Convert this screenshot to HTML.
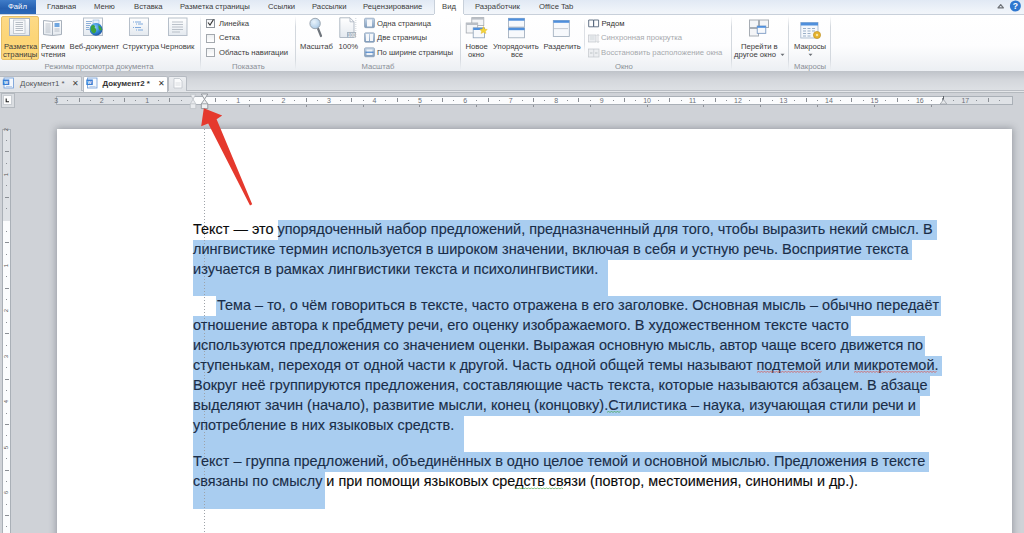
<!DOCTYPE html>
<html><head><meta charset="utf-8">
<style>
*{box-sizing:border-box}
html,body{margin:0;padding:0}
body{width:1024px;height:533px;overflow:hidden;position:relative;background:#c9cdd3;font-family:"Liberation Sans",sans-serif;}
.a{position:absolute}
.t{position:absolute;white-space:nowrap;font-size:7.7px;line-height:9px;color:#3c3c3c}
.g{color:#8a8f96}
.dis{color:#a6a9ad}
.sep{position:absolute;top:16px;width:1px;height:54px;background:linear-gradient(rgba(200,205,212,0),#d3d8de 20%,#d3d8de 80%,rgba(200,205,212,0))}
.ln{position:absolute;left:193px;height:20px;line-height:20px;font-size:14.5px;color:#1a2d48;white-space:pre;transform-origin:0 0;-webkit-text-stroke:0.12px currentColor}
.bk{color:#0a0a0a}
.hl{position:absolute;background:#a9cdf0}
.rn{position:absolute;top:96.5px;font-size:7px;line-height:7px;color:#6c7178;width:14px;margin-left:-7px;text-align:center}
.tk{position:absolute;background:#8b8f95}
</style></head><body>

<!-- ===== tab row ===== -->
<div class="a" style="left:0;top:0;width:1024px;height:15px;background:linear-gradient(#e1e9f4,#eef3f9 70%,#f2f5fa);border-bottom:1px solid #c8d0da"></div>
<div class="a" style="left:0;top:0;width:36px;height:14px;background:linear-gradient(#3f7cc8,#2660b0 60%,#2a68b8)"></div>
<div class="t" style="left:8px;top:2px;color:#fff;font-size:7.7px">Файл</div>
<div class="t" style="left:47px;top:2px">Главная</div>
<div class="t" style="left:94px;top:2px">Меню</div>
<div class="t" style="left:134px;top:2px">Вставка</div>
<div class="t" style="left:180px;top:2px">Разметка страницы</div>
<div class="t" style="left:268px;top:2px">Ссылки</div>
<div class="t" style="left:312px;top:2px">Рассылки</div>
<div class="t" style="left:363px;top:2px">Рецензирование</div>
<div class="a" style="left:434px;top:0;width:30px;height:16px;background:#fff;border-left:1px solid #c8d0da;border-right:1px solid #c8d0da"></div>
<div class="t" style="left:442px;top:2px">Вид</div>
<div class="t" style="left:475px;top:2px">Разработчик</div>
<div class="t" style="left:539px;top:2px">Office Tab</div>
<!-- help icons -->
<svg class="a" style="left:990px;top:0px" width="34" height="14" viewBox="990 0 34 14"><path d="M998 7.8 L1000.7 4.6 L1003.4 7.8 Z" fill="none" stroke="#6f7378" stroke-width="1.3" stroke-linejoin="round"/><circle cx="1015.4" cy="6" r="5.5" fill="#2f77cf"/><text x="1015.4" y="9.3" font-size="8.6" font-weight="bold" fill="#fff" text-anchor="middle" font-family="Liberation Sans">?</text></svg>

<!-- ===== ribbon ===== -->
<div class="a" style="left:0;top:15px;width:1024px;height:56.5px;background:linear-gradient(#ffffff,#fdfdfe 55%,#eceff3);border-bottom:1.2px solid #a4a9b1"></div>
<div class="a" style="left:434px;top:14px;width:30px;height:2px;background:#fff"></div>

<!-- group 1 -->
<div class="a" style="left:1px;top:16px;width:38px;height:44px;background:linear-gradient(#fdda86,#fcd577 50%,#fcd87c);border:1px solid #e8c16a;border-radius:2px"></div>
<div class="t" style="left:4px;top:41.5px">Разметка</div>
<div class="t" style="left:3px;top:49.5px">страницы</div>
<div class="t" style="left:41px;top:41.5px">Режим</div>
<div class="t" style="left:41px;top:49.5px">чтения</div>
<div class="t" style="left:69.5px;top:41.5px">Веб-документ</div>
<div class="t" style="left:122.5px;top:41.5px">Структура</div>
<div class="t" style="left:160.5px;top:41.5px">Черновик</div>
<div class="t g" style="left:44.5px;top:61.5px">Режимы просмотра документа</div>
<div class="sep" style="left:200px"></div>

<!-- group 2 -->
<div class="a" style="left:206px;top:18.5px;width:9px;height:9px;border:1px solid #8f959c;background:linear-gradient(#f3f4f6,#fff)"></div>
<svg class="a" style="left:206px;top:18px" width="9" height="9" viewBox="0 0 9 9"><path d="M2 4.5 L4 7 L7.5 1.5" fill="none" stroke="#333" stroke-width="1.1"/></svg>
<div class="a" style="left:206px;top:33.5px;width:9px;height:9px;border:1px solid #a3a8ae;background:linear-gradient(#eef0f2,#fff)"></div>
<div class="a" style="left:206px;top:48px;width:9px;height:9px;border:1px solid #a3a8ae;background:linear-gradient(#eef0f2,#fff)"></div>
<div class="t" style="left:219px;top:18.5px">Линейка</div>
<div class="t" style="left:219px;top:33px">Сетка</div>
<div class="t" style="left:219px;top:47.5px">Область навигации</div>
<div class="t g" style="left:232px;top:61.5px">Показать</div>
<div class="sep" style="left:295px"></div>

<!-- group 3 -->
<div class="t" style="left:300px;top:41.5px">Масштаб</div>
<div class="t" style="left:338.5px;top:41.5px">100%</div>
<div class="t" style="left:377px;top:18.5px">Одна страница</div>
<div class="t" style="left:377px;top:33px">Две страницы</div>
<div class="t" style="left:377px;top:47.5px">По ширине страницы</div>
<div class="t g" style="left:361.5px;top:61.5px">Масштаб</div>
<div class="sep" style="left:460px"></div>

<!-- group 4 -->
<div class="t" style="left:465.5px;top:41.5px">Новое</div>
<div class="t" style="left:468px;top:49.5px">окно</div>
<div class="t" style="left:493px;top:41.5px">Упорядочить</div>
<div class="t" style="left:511px;top:49.5px">все</div>
<div class="t" style="left:543.5px;top:41.5px">Разделить</div>
<div class="a" style="left:583.5px;top:19px;width:1px;height:34px;background:linear-gradient(rgba(210,214,220,0),#dde0e5 25%,#dde0e5 75%,rgba(210,214,220,0))"></div>
<div class="t" style="left:601.5px;top:18.5px;color:#333">Рядом</div>
<div class="t dis" style="left:601px;top:33px">Синхронная прокрутка</div>
<div class="t dis" style="left:601px;top:47.5px">Восстановить расположение окна</div>
<div class="t g" style="left:615px;top:61.5px">Окно</div>
<div class="sep" style="left:731px"></div>
<div class="t" style="left:741px;top:41.5px">Перейти в</div>
<div class="t" style="left:734px;top:49.5px">другое окно</div>
<svg class="a" style="left:780px;top:53px" width="5" height="4" viewBox="0 0 5 4"><path d="M0.5 0.8 H4.5 L2.5 3 Z" fill="#6b6f75"/></svg>
<div class="sep" style="left:788px"></div>

<!-- group 5 -->
<div class="t" style="left:794px;top:41.5px">Макросы</div>
<svg class="a" style="left:807.5px;top:53px" width="5" height="4" viewBox="0 0 5 4"><path d="M0.5 0.8 H4.5 L2.5 3 Z" fill="#6b6f75"/></svg>
<div class="t g" style="left:794px;top:61.5px">Макросы</div>
<div class="sep" style="left:830px"></div>

<!-- ===== doc tab bar ===== -->
<div class="a" style="left:0;top:71px;width:1024px;height:21px;background:linear-gradient(#bfc3c9,#d3d6db 40%,#dfe2e6)"></div>
<div class="a" style="left:0;top:90px;width:1024px;height:1px;background:#b9bdc3"></div>
<div class="a" style="left:0;top:91px;width:1024px;height:1px;background:#e4e6e9"></div>
<div class="a" style="left:0;top:92px;width:1024px;height:1px;background:#b5babf"></div>
<div class="a" style="left:-2px;top:75.5px;width:84px;height:15.5px;background:linear-gradient(#eceef1,#dfe2e6);border:1px solid #b6bbc2;border-bottom:none;border-radius:2px 2px 0 0"></div>
<div class="t" style="left:20px;top:79px;font-size:7.9px;color:#55585c">Документ1 *</div>
<div class="t" style="left:72px;top:78.5px;font-size:8px;color:#444">✕</div>
<div class="a" style="left:82.5px;top:75.5px;width:85px;height:16.5px;background:#fff;border:1px solid #b6bbc2;border-bottom:none;border-radius:2px 2px 0 0"></div>
<div class="t" style="left:102.5px;top:79px;font-size:7.9px;font-weight:bold;color:#333">Документ2 *</div>
<div class="t" style="left:157.5px;top:78.5px;font-size:8px;color:#333">✕</div>
<div class="a" style="left:168px;top:75.5px;width:19px;height:15px;background:linear-gradient(#eceef1,#dfe2e6);border:1px solid #b6bbc2;border-bottom:none;border-radius:2px 2px 0 0"></div>

<!-- ===== ruler row ===== -->
<div class="a" style="left:0;top:93px;width:1024px;height:440px;background:#cfd2d7"></div>
<div class="a" style="left:1px;top:93px;width:13.5px;height:15px;background:#dadde1;border:1px solid #b4b9bf"></div>
<div class="a" style="left:3px;top:95px;width:8.5px;height:9.5px;background:#fdfdfd;border:1px solid #c9cdd2"></div>
<svg class="a" style="left:4px;top:96px" width="7" height="8" viewBox="0 0 7 8"><path d="M2.2 2.5 V5.8 H5" fill="none" stroke="#1f1f1f" stroke-width="1.1"/></svg>
<div class="a" style="left:56px;top:95.5px;width:957px;height:9px;background:#dfe2e6;border:1px solid #aab0b7"></div>
<div class="a" style="left:193.5px;top:96.5px;width:750px;height:7px;background:#fbfcfd"></div>
<div class="a" style="left:943px;top:96px;width:1px;height:4px;background:#5d6268"></div>
<div class="a" style="left:2px;top:128.5px;width:9px;height:410px;background:#fbfcfd;border:1px solid #aab0b7"></div>
<div class="a" style="left:3px;top:129.5px;width:7px;height:91px;background:#dfe2e6"></div>
<div class="rn" style="left:56.2px">3</div>
<div class="tk" style="left:67.1px;top:99.5px;width:1px;height:1px"></div>
<div class="tk" style="left:78.5px;top:98px;width:1px;height:4px"></div>
<div class="tk" style="left:89.8px;top:99.5px;width:1px;height:1px"></div>
<div class="rn" style="left:101.7px">2</div>
<div class="tk" style="left:112.6px;top:99.5px;width:1px;height:1px"></div>
<div class="tk" style="left:123.9px;top:98px;width:1px;height:4px"></div>
<div class="tk" style="left:135.3px;top:99.5px;width:1px;height:1px"></div>
<div class="rn" style="left:147.1px">1</div>
<div class="tk" style="left:158.0px;top:99.5px;width:1px;height:1px"></div>
<div class="tk" style="left:169.4px;top:98px;width:1px;height:4px"></div>
<div class="tk" style="left:180.7px;top:99.5px;width:1px;height:1px"></div>
<div class="tk" style="left:203.5px;top:99.5px;width:1px;height:1px"></div>
<div class="tk" style="left:214.8px;top:98px;width:1px;height:4px"></div>
<div class="tk" style="left:226.2px;top:99.5px;width:1px;height:1px"></div>
<div class="rn" style="left:238.1px">1</div>
<div class="tk" style="left:248.9px;top:99.5px;width:1px;height:1px"></div>
<div class="tk" style="left:260.3px;top:98px;width:1px;height:4px"></div>
<div class="tk" style="left:271.6px;top:99.5px;width:1px;height:1px"></div>
<div class="rn" style="left:283.5px">2</div>
<div class="tk" style="left:294.4px;top:99.5px;width:1px;height:1px"></div>
<div class="tk" style="left:305.7px;top:98px;width:1px;height:4px"></div>
<div class="tk" style="left:317.1px;top:99.5px;width:1px;height:1px"></div>
<div class="rn" style="left:329.0px">3</div>
<div class="tk" style="left:339.8px;top:99.5px;width:1px;height:1px"></div>
<div class="tk" style="left:351.2px;top:98px;width:1px;height:4px"></div>
<div class="tk" style="left:362.5px;top:99.5px;width:1px;height:1px"></div>
<div class="rn" style="left:374.4px">4</div>
<div class="tk" style="left:385.3px;top:99.5px;width:1px;height:1px"></div>
<div class="tk" style="left:396.6px;top:98px;width:1px;height:4px"></div>
<div class="tk" style="left:408.0px;top:99.5px;width:1px;height:1px"></div>
<div class="rn" style="left:419.9px">5</div>
<div class="tk" style="left:430.7px;top:99.5px;width:1px;height:1px"></div>
<div class="tk" style="left:442.1px;top:98px;width:1px;height:4px"></div>
<div class="tk" style="left:453.4px;top:99.5px;width:1px;height:1px"></div>
<div class="rn" style="left:465.3px">6</div>
<div class="tk" style="left:476.2px;top:99.5px;width:1px;height:1px"></div>
<div class="tk" style="left:487.5px;top:98px;width:1px;height:4px"></div>
<div class="tk" style="left:498.9px;top:99.5px;width:1px;height:1px"></div>
<div class="rn" style="left:510.8px">7</div>
<div class="tk" style="left:521.6px;top:99.5px;width:1px;height:1px"></div>
<div class="tk" style="left:533.0px;top:98px;width:1px;height:4px"></div>
<div class="tk" style="left:544.3px;top:99.5px;width:1px;height:1px"></div>
<div class="rn" style="left:556.2px">8</div>
<div class="tk" style="left:567.1px;top:99.5px;width:1px;height:1px"></div>
<div class="tk" style="left:578.4px;top:98px;width:1px;height:4px"></div>
<div class="tk" style="left:589.8px;top:99.5px;width:1px;height:1px"></div>
<div class="rn" style="left:601.6px">9</div>
<div class="tk" style="left:612.5px;top:99.5px;width:1px;height:1px"></div>
<div class="tk" style="left:623.9px;top:98px;width:1px;height:4px"></div>
<div class="tk" style="left:635.2px;top:99.5px;width:1px;height:1px"></div>
<div class="rn" style="left:647.1px">10</div>
<div class="tk" style="left:658.0px;top:99.5px;width:1px;height:1px"></div>
<div class="tk" style="left:669.3px;top:98px;width:1px;height:4px"></div>
<div class="tk" style="left:680.7px;top:99.5px;width:1px;height:1px"></div>
<div class="rn" style="left:692.6px">11</div>
<div class="tk" style="left:703.4px;top:99.5px;width:1px;height:1px"></div>
<div class="tk" style="left:714.8px;top:98px;width:1px;height:4px"></div>
<div class="tk" style="left:726.1px;top:99.5px;width:1px;height:1px"></div>
<div class="rn" style="left:738.0px">12</div>
<div class="tk" style="left:748.9px;top:99.5px;width:1px;height:1px"></div>
<div class="tk" style="left:760.2px;top:98px;width:1px;height:4px"></div>
<div class="tk" style="left:771.6px;top:99.5px;width:1px;height:1px"></div>
<div class="rn" style="left:783.5px">13</div>
<div class="tk" style="left:794.3px;top:99.5px;width:1px;height:1px"></div>
<div class="tk" style="left:805.7px;top:98px;width:1px;height:4px"></div>
<div class="tk" style="left:817.0px;top:99.5px;width:1px;height:1px"></div>
<div class="rn" style="left:828.9px">14</div>
<div class="tk" style="left:839.8px;top:99.5px;width:1px;height:1px"></div>
<div class="tk" style="left:851.1px;top:98px;width:1px;height:4px"></div>
<div class="tk" style="left:862.5px;top:99.5px;width:1px;height:1px"></div>
<div class="rn" style="left:874.4px">15</div>
<div class="tk" style="left:885.2px;top:99.5px;width:1px;height:1px"></div>
<div class="tk" style="left:896.6px;top:98px;width:1px;height:4px"></div>
<div class="tk" style="left:907.9px;top:99.5px;width:1px;height:1px"></div>
<div class="rn" style="left:919.8px">16</div>
<div class="tk" style="left:930.7px;top:99.5px;width:1px;height:1px"></div>
<div class="tk" style="left:942.0px;top:98px;width:1px;height:4px"></div>
<div class="tk" style="left:953.4px;top:99.5px;width:1px;height:1px"></div>
<div class="rn" style="left:965.3px">17</div>
<div class="tk" style="left:976.1px;top:99.5px;width:1px;height:1px"></div>
<div class="tk" style="left:987.5px;top:98px;width:1px;height:4px"></div>
<div class="tk" style="left:998.8px;top:99.5px;width:1px;height:1px"></div>
<div class="tk" style="left:248.9px;top:105px;width:1px;height:2px;background:#8d9096"></div>
<div class="tk" style="left:305.7px;top:105px;width:1px;height:2px;background:#8d9096"></div>
<div class="tk" style="left:362.5px;top:105px;width:1px;height:2px;background:#8d9096"></div>
<div class="tk" style="left:419.4px;top:105px;width:1px;height:2px;background:#8d9096"></div>
<div class="tk" style="left:476.2px;top:105px;width:1px;height:2px;background:#8d9096"></div>
<div class="tk" style="left:533.0px;top:105px;width:1px;height:2px;background:#8d9096"></div>
<div class="tk" style="left:589.8px;top:105px;width:1px;height:2px;background:#8d9096"></div>
<div class="tk" style="left:646.6px;top:105px;width:1px;height:2px;background:#8d9096"></div>
<div class="tk" style="left:703.4px;top:105px;width:1px;height:2px;background:#8d9096"></div>
<div class="tk" style="left:760.2px;top:105px;width:1px;height:2px;background:#8d9096"></div>
<div class="tk" style="left:817.0px;top:105px;width:1px;height:2px;background:#8d9096"></div>
<div class="tk" style="left:873.9px;top:105px;width:1px;height:2px;background:#8d9096"></div>
<div class="tk" style="left:930.7px;top:105px;width:1px;height:2px;background:#8d9096"></div>
<div class="a" style="left:2px;top:125.6px;width:9px;height:7px;font-size:6px;line-height:7px;color:#555;text-align:center;transform:rotate(-90deg)">2</div>
<div class="tk" style="left:6px;top:140.0px;width:1px;height:1px"></div>
<div class="tk" style="left:4.5px;top:151.3px;width:4px;height:1px"></div>
<div class="tk" style="left:6px;top:162.7px;width:1px;height:1px"></div>
<div class="a" style="left:2px;top:171.1px;width:9px;height:7px;font-size:6px;line-height:7px;color:#555;text-align:center;transform:rotate(-90deg)">1</div>
<div class="tk" style="left:6px;top:185.4px;width:1px;height:1px"></div>
<div class="tk" style="left:4.5px;top:196.8px;width:4px;height:1px"></div>
<div class="tk" style="left:6px;top:208.1px;width:1px;height:1px"></div>
<div class="tk" style="left:6px;top:230.9px;width:1px;height:1px"></div>
<div class="tk" style="left:4.5px;top:242.2px;width:4px;height:1px"></div>
<div class="tk" style="left:6px;top:253.6px;width:1px;height:1px"></div>
<div class="a" style="left:2px;top:261.9px;width:9px;height:7px;font-size:6px;line-height:7px;color:#555;text-align:center;transform:rotate(-90deg)">1</div>
<div class="tk" style="left:6px;top:276.3px;width:1px;height:1px"></div>
<div class="tk" style="left:4.5px;top:287.7px;width:4px;height:1px"></div>
<div class="tk" style="left:6px;top:299.0px;width:1px;height:1px"></div>
<div class="a" style="left:2px;top:307.4px;width:9px;height:7px;font-size:6px;line-height:7px;color:#555;text-align:center;transform:rotate(-90deg)">2</div>
<div class="tk" style="left:6px;top:321.8px;width:1px;height:1px"></div>
<div class="tk" style="left:4.5px;top:333.1px;width:4px;height:1px"></div>
<div class="tk" style="left:6px;top:344.5px;width:1px;height:1px"></div>
<div class="a" style="left:2px;top:352.9px;width:9px;height:7px;font-size:6px;line-height:7px;color:#555;text-align:center;transform:rotate(-90deg)">3</div>
<div class="tk" style="left:6px;top:367.2px;width:1px;height:1px"></div>
<div class="tk" style="left:4.5px;top:378.6px;width:4px;height:1px"></div>
<div class="tk" style="left:6px;top:389.9px;width:1px;height:1px"></div>
<div class="a" style="left:2px;top:398.3px;width:9px;height:7px;font-size:6px;line-height:7px;color:#555;text-align:center;transform:rotate(-90deg)">4</div>
<div class="tk" style="left:6px;top:412.7px;width:1px;height:1px"></div>
<div class="tk" style="left:4.5px;top:424.0px;width:4px;height:1px"></div>
<div class="tk" style="left:6px;top:435.4px;width:1px;height:1px"></div>
<div class="a" style="left:2px;top:443.8px;width:9px;height:7px;font-size:6px;line-height:7px;color:#555;text-align:center;transform:rotate(-90deg)">5</div>
<div class="tk" style="left:6px;top:458.1px;width:1px;height:1px"></div>
<div class="tk" style="left:4.5px;top:469.5px;width:4px;height:1px"></div>
<div class="tk" style="left:6px;top:480.8px;width:1px;height:1px"></div>
<div class="a" style="left:2px;top:489.2px;width:9px;height:7px;font-size:6px;line-height:7px;color:#555;text-align:center;transform:rotate(-90deg)">6</div>
<div class="tk" style="left:6px;top:503.6px;width:1px;height:1px"></div>
<div class="tk" style="left:4.5px;top:514.9px;width:4px;height:1px"></div>
<div class="tk" style="left:6px;top:526.3px;width:1px;height:1px"></div>
<svg class="a" style="left:185px;top:92px" width="30" height="20" viewBox="185 92 30 20">
<path d="M190.3 94.3 H195.8 L193 99.3 L195.8 103.8 V108.6 H190.3 V103.8 L193 99.3 Z" fill="#e9ebee" stroke="#bfc3c8" stroke-width="0.8"/>
<path d="M190.3 103.8 H195.8" stroke="#bfc3c8" stroke-width="0.8"/>
<path d="M201.3 94 H207.8 L204.5 99.3 L207.8 103.8 V108.6 H201.3 V103.8 L204.5 99.3 Z" fill="#eef0f2" stroke="#8e9399" stroke-width="0.9"/>
<path d="M201.3 103.8 H207.8" stroke="#8e9399" stroke-width="0.8"/>
</svg>
<svg class="a" style="left:938px;top:96px" width="11" height="10" viewBox="938 96 11 10"><path d="M940.2 104 L943.5 99.6 L946.8 104 Z" fill="#e6e8eb" stroke="#9ea3a9" stroke-width="0.8"/></svg>

<svg class="a" style="left:0;top:0" width="1024" height="110" viewBox="0 0 1024 110">
<defs>
<linearGradient id="pg" x1="0" y1="0" x2="0" y2="1"><stop offset="0" stop-color="#ffffff"/><stop offset="1" stop-color="#e4e9ef"/></linearGradient>
<linearGradient id="bl" x1="0" y1="0" x2="0" y2="1"><stop offset="0" stop-color="#7fb2ea"/><stop offset="1" stop-color="#3d7fd0"/></linearGradient>
<radialGradient id="glb" cx="0.4" cy="0.35" r="0.7"><stop offset="0" stop-color="#8fd0ff"/><stop offset="0.6" stop-color="#2f86d6"/><stop offset="1" stop-color="#1d4f9a"/></radialGradient>
<radialGradient id="lens" cx="0.4" cy="0.35" r="0.7"><stop offset="0" stop-color="#eaf4fc"/><stop offset="1" stop-color="#a9c9e6"/></radialGradient>
<linearGradient id="sq" x1="0" y1="0" x2="0" y2="1"><stop offset="0" stop-color="#c4d5e8"/><stop offset="1" stop-color="#7f9cbd"/></linearGradient>
</defs>
<!-- Разметка страницы -->
<rect x="9.5" y="18.5" width="20" height="17" fill="url(#pg)" stroke="#aab4c0" stroke-width="1"/>
<rect x="13.5" y="20" width="11.5" height="13.5" fill="#f7f8fa" stroke="#b8c0ca" stroke-width="0.8"/>
<path d="M15.5 22.5h7.5M15.5 24.5h7.5M15.5 26.5h7.5M15.5 28.5h7.5M15.5 30.5h7.5" stroke="#9aa3ad" stroke-width="0.7"/>
<!-- Режим чтения (book) -->
<path d="M43.5 20.5 L52.5 21.5 L52.5 35.5 L43.5 34.5 Z" fill="url(#pg)" stroke="#a7b0bb" stroke-width="1"/>
<path d="M61.5 20.5 L52.5 21.5 L52.5 35.5 L61.5 34.5 Z" fill="url(#pg)" stroke="#a7b0bb" stroke-width="1"/>
<path d="M45.5 24h5M45.5 26h5M45.5 28h5M45.5 30h5M45.5 32h5" stroke="#a5adb7" stroke-width="0.7"/>
<rect x="54.5" y="23" width="5" height="4" fill="#6fa6e0"/>
<path d="M54.5 29h5M54.5 31h5" stroke="#a5adb7" stroke-width="0.7"/>
<!-- Веб-документ -->
<rect x="83.5" y="18" width="19" height="17.5" fill="url(#pg)" stroke="#b6bfca" stroke-width="1"/>
<path d="M86 21.5h6M86 23.5h5M86 25.5h4M86 27.5h3M86 29.5h3" stroke="#5f8fc9" stroke-width="0.7"/>
<rect x="93" y="20" width="6" height="4" fill="#e6eefa" stroke="#8cb0da" stroke-width="0.6"/>
<circle cx="96" cy="29.3" r="6.4" fill="url(#glb)"/>
<path d="M91 26.5 Q93 24 95 26 Q94 28 96 29 Q97 31 95 33 Q93 34 92 32 Q90 30 91 26.5 Z" fill="#3da33a"/>
<path d="M98.5 25 Q101.5 27 102 29.5 Q101 31 99.5 30 Q98 28 98.5 25 Z" fill="#3da33a"/>
<!-- Структура -->
<rect x="129.5" y="18" width="19" height="17.5" fill="url(#pg)" stroke="#b6bfca" stroke-width="1"/>
<path d="M133 22h1M135 22h6M136 24h1M138 24h5M133 27.5h1M135 27.5h6M136 30h1M138 30h5" stroke="#7fa9dc" stroke-width="1"/>
<!-- Черновик -->
<rect x="168.5" y="18" width="18.5" height="17.5" fill="url(#pg)" stroke="#b6bfca" stroke-width="1"/>
<path d="M172 22h11M172 24.5h11M172 27h11M172 29.5h11M172 32h8" stroke="#b3bac3" stroke-width="0.9"/>
<!-- Масштаб magnifier -->
<line x1="318" y1="28.5" x2="321" y2="36" stroke="#6f757c" stroke-width="2.2" stroke-linecap="round"/>
<circle cx="315.1" cy="23.5" r="5.2" fill="url(#lens)" stroke="#9ba6b1" stroke-width="1"/>
<!-- 100% -->
<path d="M339.8 17.8 H350 L354 21.8 V37.5 H339.8 Z" fill="url(#pg)" stroke="#a9b3bf" stroke-width="0.9"/>
<path d="M350 17.8 V21.8 H354" fill="none" stroke="#a9b3bf" stroke-width="0.8"/>
<path d="M355.8 18 V37.5" stroke="#c4cad2" stroke-width="0.8" stroke-dasharray="1 1"/>
<rect x="347" y="32" width="9" height="5.5" fill="#a8b3bf"/>
<text x="351.5" y="36.6" font-size="4.5" fill="#fff" text-anchor="middle" font-family="Liberation Sans">100</text>
<!-- small zoom icons -->
<rect x="364.5" y="18.2" width="10" height="9.5" rx="1.2" fill="url(#sq)" stroke="#7d93ad" stroke-width="0.6"/>
<rect x="367" y="19.5" width="5" height="7" fill="#f5f7fa"/>
<rect x="364.5" y="32.8" width="10" height="9.5" rx="1.2" fill="url(#sq)" stroke="#7d93ad" stroke-width="0.6"/>
<rect x="366" y="34" width="3" height="7" fill="#f5f7fa"/><rect x="370" y="34" width="3" height="7" fill="#f5f7fa"/>
<rect x="364.5" y="47.8" width="10" height="9" rx="1.2" fill="url(#sq)" stroke="#7d93ad" stroke-width="0.6"/>
<rect x="366.5" y="49.5" width="6" height="5.5" fill="#eef2f7"/>
<path d="M365.5 52.2 h8" stroke="#2f73c6" stroke-width="1"/>
<!-- Новое окно -->
<rect x="471.8" y="17.6" width="12" height="8" fill="#f4f5f7" stroke="#a3a9b0" stroke-width="0.8"/>
<rect x="471.8" y="17.6" width="12" height="2" fill="#b9bec5"/>
<rect x="466.2" y="23" width="11.5" height="10" fill="#f4f5f7" stroke="#a3a9b0" stroke-width="0.8"/>
<rect x="466.2" y="23" width="11.5" height="2" fill="#b9bec5"/>
<rect x="473.2" y="27.8" width="11.3" height="10" fill="#f7f9fc" stroke="#8ca0b8" stroke-width="0.8"/>
<rect x="473.2" y="27.8" width="11.3" height="2.2" fill="#4f8fdc"/>
<path d="M483.5 26.5 L484.6 29 L487.3 29.5 L485.3 31.2 L486 33.5 L483.5 32.2 L481 33.5 L481.7 31.2 L479.8 29.5 L482.4 29 Z" fill="#f2d43a" stroke="#e0b020" stroke-width="0.4"/>
<!-- Упорядочить все -->
<rect x="508.4" y="18.3" width="16.2" height="8.8" fill="#f7f9fc" stroke="#9aa8b8" stroke-width="0.8"/>
<rect x="508.4" y="18.3" width="16.2" height="2.4" fill="#4f8fdc"/>
<rect x="508.4" y="27.8" width="16.2" height="10" fill="#f7f9fc" stroke="#9aa8b8" stroke-width="0.8"/>
<rect x="508.4" y="27.8" width="16.2" height="2.4" fill="#4f8fdc"/>
<!-- Разделить -->
<rect x="553.3" y="20.4" width="16" height="16" fill="#f7f9fc" stroke="#9aa8b8" stroke-width="0.8"/>
<rect x="553.3" y="20.4" width="16" height="2.4" fill="#4f8fdc"/>
<path d="M554.5 28.6 H568" stroke="#7b8490" stroke-width="0.8" stroke-dasharray="1 1"/>
<!-- Рядом -->
<path d="M588.7 20 H593.5 V26.8 H588.7 Z M593.7 20 H598.6 V26.8 H593.7 Z" fill="#fdfdfe" stroke="#56677c" stroke-width="0.9"/>
<!-- Синхронная (disabled) -->
<rect x="588.5" y="35" width="7.5" height="7" fill="#eceef1" stroke="#c3c7cc" stroke-width="0.7"/>
<path d="M590 37h4.5M590 39h4.5" stroke="#c8ccd1" stroke-width="0.6"/>
<path d="M598 34.5 V42.5 M596.8 35.8 L598 34.5 L599.2 35.8 M596.8 41.2 L598 42.5 L599.2 41.2" fill="none" stroke="#b9bdc3" stroke-width="0.6"/>
<!-- Восстановить (disabled) -->
<rect x="588.5" y="49" width="10.5" height="8" fill="#eceef1" stroke="#c3c7cc" stroke-width="0.7"/>
<path d="M593.7 49 V57" stroke="#c3c7cc" stroke-width="0.6"/>
<path d="M590 53 h2.5 M595 53 h2.5" stroke="#b2b7bd" stroke-width="0.8"/>
<!-- Перейти в другое окно -->
<rect x="749.5" y="20" width="9" height="7.5" fill="#f4f5f7" stroke="#a7adb4" stroke-width="1"/>
<rect x="759.5" y="20" width="9" height="7.5" fill="#f4f5f7" stroke="#a7adb4" stroke-width="1"/>
<rect x="749.5" y="28.5" width="9" height="7.5" fill="#f4f5f7" stroke="#a7adb4" stroke-width="1"/>
<rect x="757.2" y="26" width="8.6" height="7.3" fill="#f7f9fc" stroke="#6d8fbd" stroke-width="0.8"/>
<rect x="757.2" y="26" width="8.6" height="1.8" fill="#4f8fdc"/>
<!-- Макросы -->
<rect x="800.8" y="22.5" width="17.2" height="15.5" fill="#f5f8fc" stroke="#9fb2c9" stroke-width="0.8"/>
<rect x="800.8" y="22.5" width="17.2" height="3" fill="#4f8fdc"/>
<path d="M803 28.5h3M807.5 28.5h3M812 28.5h3M803 31h3M807.5 31h3M812 31h3M803 33.5h3M807.5 33.5h3M803 36h3M807.5 36h3" stroke="#9bb0c8" stroke-width="1"/>
<circle cx="817" cy="35" r="3.6" fill="#e5b32f" stroke="#b98a1c" stroke-width="0.6"/>
<circle cx="817" cy="35" r="1.2" fill="#f7e6a6"/>
<!-- doc tab word icons -->
<rect x="4" y="78" width="9.5" height="10" fill="#f4f8fd" stroke="#6b9ad6" stroke-width="0.8"/>
<rect x="2.8" y="79.5" width="6.5" height="5.5" fill="#3a7fd5"/>
<text x="6" y="84" font-size="4.2" fill="#fff" font-weight="bold" text-anchor="middle" font-family="Liberation Sans">W</text>
<path d="M6 86.5h6" stroke="#9bb5d8" stroke-width="0.6"/>
<rect x="87.5" y="78" width="9.5" height="10" fill="#f4f8fd" stroke="#6b9ad6" stroke-width="0.8"/>
<rect x="86.3" y="79.5" width="6.5" height="5.5" fill="#3a7fd5"/>
<text x="89.5" y="84" font-size="4.2" fill="#fff" font-weight="bold" text-anchor="middle" font-family="Liberation Sans">W</text>
<path d="M89.5 86.5h6" stroke="#9bb5d8" stroke-width="0.6"/>
<!-- new tab page icon -->
<path d="M174 78.5 H179.5 L182 81 V88 H174 Z" fill="#fafbfc" stroke="#b9bec5" stroke-width="0.7"/>
<path d="M175.5 83h5M175.5 85h5" stroke="#c9cdd2" stroke-width="0.6"/>
</svg>

<!-- ===== doc area ===== -->


<div class="a" style="left:57px;top:129px;width:955px;height:420px;background:#fff;box-shadow:0 0 7px 1px rgba(60,66,76,0.38)"></div>

<!-- highlight -->
<div class="hl" style="left:278px;top:220px;width:659px;height:20px"></div>
<div class="hl" style="left:193px;top:240px;width:719px;height:20px"></div>
<div class="hl" style="left:193px;top:260px;width:415px;height:36px"></div>
<div class="hl" style="left:216px;top:296px;width:725px;height:20px"></div>
<div class="hl" style="left:193px;top:316px;width:658px;height:20px"></div>
<div class="hl" style="left:193px;top:336px;width:732px;height:20px"></div>
<div class="hl" style="left:193px;top:356px;width:749px;height:20px"></div>
<div class="hl" style="left:193px;top:376px;width:737px;height:19.5px"></div>
<div class="hl" style="left:193px;top:395.5px;width:727px;height:20px"></div>
<div class="hl" style="left:193px;top:415.5px;width:271px;height:36.5px"></div>
<div class="hl" style="left:193px;top:452px;width:736px;height:20px"></div>
<div class="hl" style="left:193px;top:472px;width:132px;height:36.5px"></div>
<div class="hl" style="left:193px;top:296px;width:23px;height:0px"></div>

<!-- dashed guide -->
<div class="a" style="left:203.5px;top:129px;width:1px;height:404px;background:repeating-linear-gradient(#9ea3a9 0 1.5px,transparent 1.5px 3px)"></div>

<!-- text lines -->
<div class="ln" style="left:193px;top:219.00px;transform:scaleX(0.9970)"><span class="bk">Текст — это </span>упорядоченный набор предложений, предназначенный для того, чтобы выразить некий смысл. В</div>
<div class="ln" style="left:193px;top:238.95px;transform:scaleX(1.0006)">лингвистике термин используется в широком значении, включая в себя и устную речь. Восприятие текста</div>
<div class="ln" style="left:193px;top:258.90px;transform:scaleX(1.0035)">изучается в рамках лингвистики текста и психолингвистики.</div>
<div class="ln" style="left:217px;top:295.05px;transform:scaleX(0.9975)">Тема – то, о чём говориться в тексте, часто отражена в его заголовке. Основная мысль – обычно передаёт</div>
<div class="ln" style="left:193px;top:315.00px;transform:scaleX(1.0018)">отношение автора к пребдмету речи, его оценку изображаемого. В художественном тексте часто</div>
<div class="ln" style="left:193px;top:334.95px;transform:scaleX(0.9959)">используются предложения со значением оценки. Выражая основную мысль, автор чаще всего движется по</div>
<div class="ln" style="left:193px;top:354.90px;transform:scaleX(0.9978)">ступенькам, переходя от одной части к другой. Часть одной общей темы называют подтемой или микротемой.</div>
<div class="ln" style="left:193px;top:374.85px;transform:scaleX(0.9974)">Вокруг неё группируются предложения, составляющие часть текста, которые называются абзацем. В абзаце</div>
<div class="ln" style="left:193px;top:394.80px;transform:scaleX(1.0029)">выделяют зачин (начало), развитие мысли, конец (концовку).Стилистика – наука, изучающая стили речи и</div>
<div class="ln" style="left:193px;top:414.75px;transform:scaleX(0.9933)">употребление в них языковых средств.</div>
<div class="ln" style="left:193px;top:450.90px;transform:scaleX(0.9986)">Текст – группа предложений, объединённых в одно целое темой и основной мыслью. Предложения в тексте</div>
<div class="ln" style="left:193px;top:470.85px;transform:scaleX(0.9923)">связаны по смыслу <span class="bk">и при помощи языковых средств связи (повтор, местоимения, синонимы и др.).</span></div>

<svg class="a" style="left:0;top:350px" width="1024" height="150" viewBox="0 350 1024 150"><path d="M757 372.3 L758.5 371.5 L760.0 372.3 L761.5 371.5 L763.0 372.3 L764.5 371.5 L766.0 372.3 L767.5 371.5 L769.0 372.3 L770.5 371.5 L772.0 372.3 L773.5 371.5 L775.0 372.3 L776.5 371.5 L778.0 372.3 L779.5 371.5 L781.0 372.3 L782.5 371.5 L784.0 372.3 L785.5 371.5 L787.0 372.3 L788.5 371.5 L790.0 372.3 L791.5 371.5 L793.0 372.3 L794.5 371.5 L796.0 372.3 L797.5 371.5 L799.0 372.3 L800.5 371.5 L802.0 372.3 L803.5 371.5 L805.0 372.3 L806.5 371.5 L808.0 372.3 L809.5 371.5 L811.0 372.3 L812.5 371.5 L814.0 372.3 L815.5 371.5 L817.0 372.3 L818.5 371.5 L820.0 372.3 L821.5 371.5" fill="none" stroke="#d9534f" stroke-width="0.7"/><path d="M854 372.3 L855.5 371.5 L857.0 372.3 L858.5 371.5 L860.0 372.3 L861.5 371.5 L863.0 372.3 L864.5 371.5 L866.0 372.3 L867.5 371.5 L869.0 372.3 L870.5 371.5 L872.0 372.3 L873.5 371.5 L875.0 372.3 L876.5 371.5 L878.0 372.3 L879.5 371.5 L881.0 372.3 L882.5 371.5 L884.0 372.3 L885.5 371.5 L887.0 372.3 L888.5 371.5 L890.0 372.3 L891.5 371.5 L893.0 372.3 L894.5 371.5 L896.0 372.3 L897.5 371.5 L899.0 372.3 L900.5 371.5 L902.0 372.3 L903.5 371.5 L905.0 372.3 L906.5 371.5 L908.0 372.3 L909.5 371.5 L911.0 372.3 L912.5 371.5 L914.0 372.3 L915.5 371.5 L917.0 372.3 L918.5 371.5 L920.0 372.3 L921.5 371.5 L923.0 372.3 L924.5 371.5 L926.0 372.3 L927.5 371.5 L929.0 372.3 L930.5 371.5 L932.0 372.3 L933.5 371.5 L935.0 372.3 L936.5 371.5" fill="none" stroke="#d9534f" stroke-width="0.7"/><path d="M607 412.3 L608.5 411.5 L610.0 412.3 L611.5 411.5 L613.0 412.3 L614.5 411.5 L616.0 412.3 L617.5 411.5 L619.0 412.3 L620.5 411.5" fill="none" stroke="#3fa14a" stroke-width="0.7"/><path d="M515 488.8 L516.5 488.0 L518.0 488.8 L519.5 488.0 L521.0 488.8 L522.5 488.0 L524.0 488.8 L525.5 488.0 L527.0 488.8 L528.5 488.0 L530.0 488.8 L531.5 488.0 L533.0 488.8 L534.5 488.0 L536.0 488.8 L537.5 488.0 L539.0 488.8 L540.5 488.0 L542.0 488.8 L543.5 488.0 L545.0 488.8 L546.5 488.0 L548.0 488.8 L549.5 488.0 L551.0 488.8 L552.5 488.0 L554.0 488.8 L555.5 488.0 L557.0 488.8 L558.5 488.0 L560.0 488.8 L561.5 488.0 L563.0 488.8" fill="none" stroke="#5cae5c" stroke-width="0.7"/></svg>
<!-- red arrow -->
<svg class="a" style="left:190px;top:100px" width="70" height="110" viewBox="190 100 70 110"><path d="M203.8 108.2 L222.2 115.6 L216.6 119.3 L252.2 204.2 L250 205.6 L208.2 123.6 L201.2 126.2 Z" fill="#e5392d"/></svg>

</body></html>
